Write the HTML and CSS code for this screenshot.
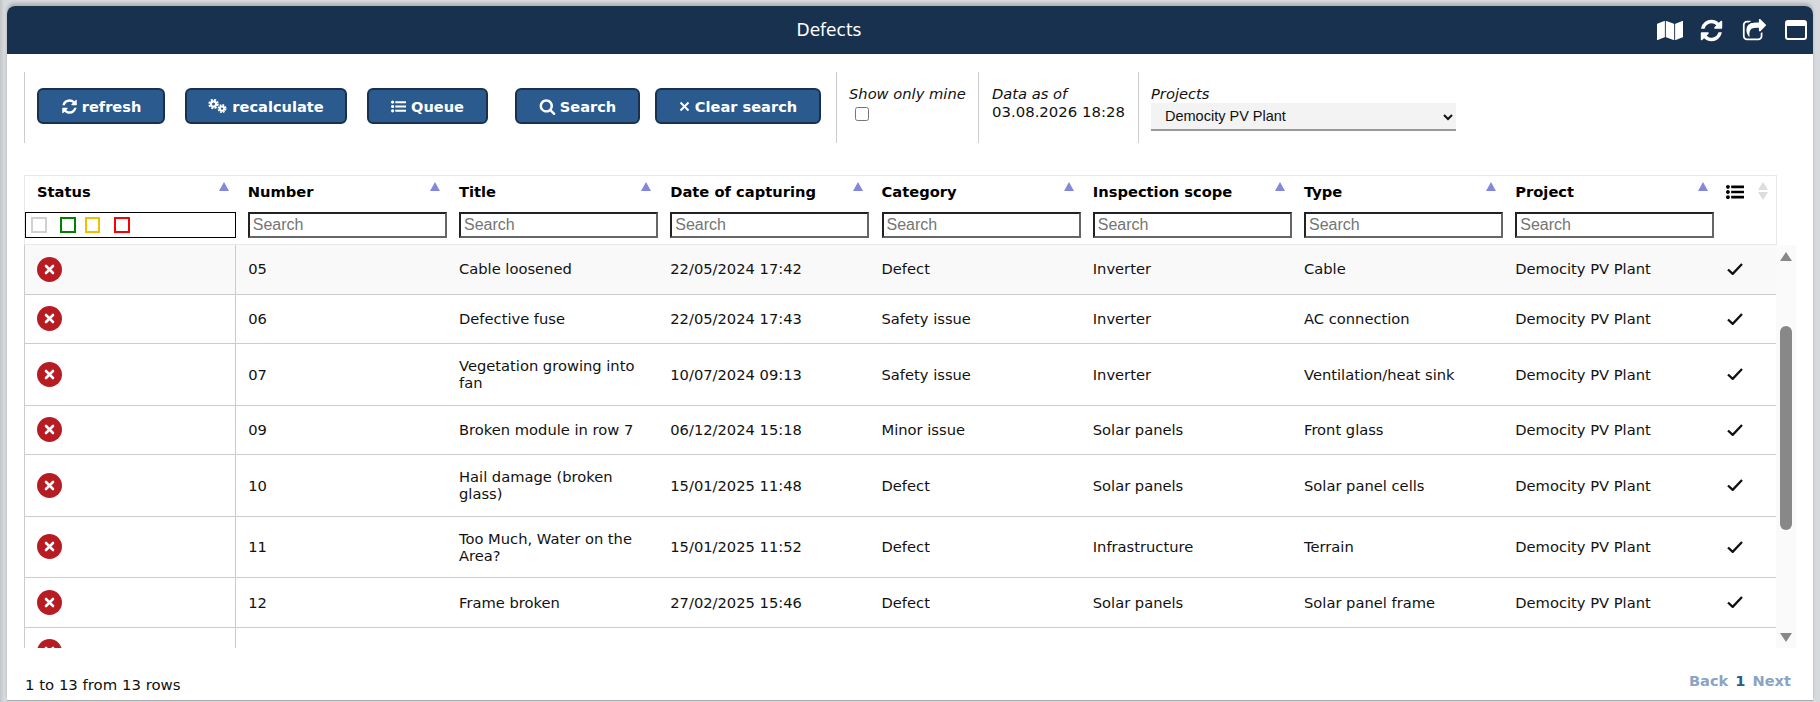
FILE: index.html
```html
<!DOCTYPE html>
<html lang="en">
<head>
<meta charset="utf-8">
<title>Defects</title>
<link rel="stylesheet" href="styles.css">
</head>
<body>
<svg class="defs" width="0" height="0" aria-hidden="true">
  <defs>
    <symbol id="i-refresh" viewBox="0 0 1792 1792"><path d="M1639 1056q0 5-1 7-64 268-268 434.5t-478 166.5q-146 0-282.5-55t-243.5-157l-129 129q-19 19-45 19t-45-19-19-45v-448q0-26 19-45t45-19h448q26 0 45 19t19 45-19 45l-137 137q71 66 161 102t187 36q134 0 250-65t186-179q11-17 53-117 8-23 30-23h192q13 0 22.5 9.5t9.5 22.5zm25-800v448q0 26-19 45t-45 19h-448q-26 0-45-19t-19-45 19-45l138-138q-148-137-349-137-134 0-250 65t-186 179q-11 17-53 117-8 23-30 23h-199q-13 0-22.5-9.5t-9.5-22.5v-7q65-268 270-434.5t480-166.5q146 0 284 55.5t245 156.5l130-129q19-19 45-19t45 19 19 45z"/></symbol>
    <symbol id="i-cogs" viewBox="0 0 19 14">
      <circle cx="5.5" cy="5" r="2.6" fill="none" stroke="#fff" stroke-width="2.2"/>
      <circle cx="5.5" cy="5" r="4.3" fill="none" stroke="#fff" stroke-width="1.8" stroke-dasharray="2 1.4"/>
      <circle cx="14" cy="9.6" r="2.2" fill="none" stroke="#fff" stroke-width="2"/>
      <circle cx="14" cy="9.6" r="3.7" fill="none" stroke="#fff" stroke-width="1.6" stroke-dasharray="1.8 1.1"/>
    </symbol>
    <symbol id="i-list" viewBox="0 0 1792 1792"><path d="M384 1408q0 80-56 136t-136 56-136-56-56-136 56-136 136-56 136 56 56 136zm0-512q0 80-56 136t-136 56-136-56-56-136 56-136 136-56 136 56 56 136zm1408 416v192q0 13-9.5 22.5t-22.5 9.5h-1216q-13 0-22.5-9.5t-9.5-22.5v-192q0-13 9.5-22.5t22.5-9.5h1216q13 0 22.5 9.5t9.5 22.5zm-1408-928q0 80-56 136t-136 56-136-56-56-136 56-136 136-56 136 56 56 136zm1408 416v192q0 13-9.5 22.5t-22.5 9.5h-1216q-13 0-22.5-9.5t-9.5-22.5v-192q0-13 9.5-22.5t22.5-9.5h1216q13 0 22.5 9.5t9.5 22.5zm0-512v192q0 13-9.5 22.5t-22.5 9.5h-1216q-13 0-22.5-9.5t-9.5-22.5v-192q0-13 9.5-22.5t22.5-9.5h1216q13 0 22.5 9.5t9.5 22.5z"/></symbol>
    <symbol id="i-search" viewBox="0 0 1792 1792"><path d="M1216 832q0-185-131.5-316.5t-316.5-131.5-316.5 131.5-131.5 316.5 131.5 316.5 316.5 131.5 316.5-131.5 131.5-316.5zm512 832q0 52-38 90t-90 38q-54 0-90-38l-343-342q-179 124-399 124-143 0-273.5-55.5t-225-150-150-225-55.5-273.5 55.5-273.5 150-225 225-150 273.5-55.5 273.5 55.5 225 150 150 225 55.5 273.5q0 220-124 399l343 343q37 37 37 90z"/></symbol>
    <symbol id="i-times" viewBox="0 0 11 11"><path d="M1.5 1.5l8 8M9.5 1.5l-8 8" stroke="#fff" stroke-width="2" fill="none"/></symbol>
    <symbol id="i-map" viewBox="0 0 1792 1792" preserveAspectRatio="none"><path d="M512 0q13 0 22.5 9.5t9.5 22.5v1472q0 20-17 28l-480 256q-7 4-15 4-13 0-22.5-9.5t-9.5-22.5v-1472q0-20 17-28l480-256q7-4 15-4zm1248 0q13 0 22.5 9.5t9.5 22.5v1472q0 20-17 28l-480 256q-7 4-15 4-13 0-22.5-9.5t-9.5-22.5v-1472q0-20 17-28l480-256q7-4 15-4zm-1120 0q8 0 14 3l512 256q18 10 18 29v1472q0 13-9.5 22.5t-22.5 9.5q-8 0-14-3l-512-256q-18-10-18-29v-1472q0-13 9.5-22.5t22.5-9.5z"/></symbol>
    <symbol id="i-share" viewBox="0 128 1728 1408"><path d="M1472 989v259q0 119-84.5 203.5t-203.5 84.5h-832q-119 0-203.5-84.5t-84.5-203.5v-832q0-119 84.5-203.5t203.5-84.5h255q13 0 22.5 9.5t9.5 22.5q0 27-26 32-77 26-133 60-10 4-16 4h-112q-66 0-113 47t-47 113v832q0 66 47 113t113 47h832q66 0 113-47t47-113v-214q0-19 18-29 28-13 54-37 16-16 35-8 21 9 21 29zm237-496l-384 384q-18 19-45 19-12 0-25-5-39-17-39-59v-192h-160q-323 0-438 131-119 137-74 473 3 23-20 34-8 2-12 2-16 0-26-13-10-14-21-31t-39.5-68.5-49.5-99.5-38.5-114-17.5-122q0-49 3.5-91t14-90 28-88 47-81.5 68.5-74 94.5-61.5 124.5-48.5 159.5-30.5 196.5-11h160v-192q0-42 39-59 13-5 25-5 26 0 45 19l384 384q19 19 19 45t-19 45z"/></symbol>
    <symbol id="i-window" viewBox="0 0 22 20"><path fill-rule="evenodd" d="M3 0h16a3 3 0 0 1 3 3v14a3 3 0 0 1-3 3H3a3 3 0 0 1-3-3V3a3 3 0 0 1 3-3zM2 6v11a1 1 0 0 0 1 1h16a1 1 0 0 0 1-1V6z"/></symbol>
    <symbol id="i-error" viewBox="0 0 25 25"><circle cx="12.5" cy="12.5" r="12.5" fill="#b71c22"/><path d="M9 9l7 7M16 9l-7 7" stroke="#fff" stroke-width="2.6" stroke-linecap="round" fill="none"/></symbol>
    <symbol id="i-check" viewBox="0 0 16 12"><path d="M1 6.5l4.7 4.4L15 1" stroke="#111" stroke-width="2.3" fill="none"/></symbol>
  </defs>
</svg>

<div class="window">
  <header class="titlebar">
    <h1 class="title">Defects</h1>
    <div class="window-tools">
      <svg class="tool tool-map"><use href="#i-map"/></svg>
      <svg class="tool tool-refresh"><use href="#i-refresh"/></svg>
      <svg class="tool tool-share"><use href="#i-share"/></svg>
      <svg class="tool tool-window"><use href="#i-window"/></svg>
    </div>
  </header>

  <section class="toolbar">
    <div class="tb-section tb-buttons">
      <button class="btn btn-refresh" type="button"><svg class="btn-icon"><use href="#i-refresh"/></svg>refresh</button>
      <button class="btn btn-recalc" type="button"><svg class="btn-icon btn-icon-wide"><use href="#i-cogs"/></svg>recalculate</button>
      <button class="btn btn-queue" type="button"><svg class="btn-icon btn-icon-list"><use href="#i-list"/></svg>Queue</button>
      <button class="btn btn-search" type="button"><svg class="btn-icon"><use href="#i-search"/></svg>Search</button>
      <button class="btn btn-clear" type="button"><svg class="btn-icon btn-icon-small"><use href="#i-times"/></svg>Clear search</button>
    </div>
    <div class="tb-section tb-mine">
      <label class="tb-label" for="mine">Show only mine</label>
      <input class="mine-check" id="mine" type="checkbox">
    </div>
    <div class="tb-section tb-data">
      <span class="tb-label">Data as of</span>
      <span class="tb-value">03.08.2026 18:28</span>
    </div>
    <div class="tb-section tb-projects">
      <label class="tb-label" for="project">Projects</label>
      <select class="project-select" id="project"><option>Democity PV Plant</option></select>
    </div>
  </section>

  <section class="grid">
    <table class="grid-head">
      <colgroup><col class="col-data"><col class="col-data"><col class="col-data"><col class="col-data"><col class="col-data"><col class="col-data"><col class="col-data"><col class="col-data"><col class="col-last"></colgroup>
      <thead>
        <tr class="head-row">
          <th>Status<span class="sort-up"></span></th>
          <th>Number<span class="sort-up"></span></th>
          <th>Title<span class="sort-up"></span></th>
          <th>Date of capturing<span class="sort-up"></span></th>
          <th>Category<span class="sort-up"></span></th>
          <th>Inspection scope<span class="sort-up"></span></th>
          <th>Type<span class="sort-up"></span></th>
          <th>Project<span class="sort-up"></span></th>
          <th class="th-tools"><svg class="list-icon"><use href="#i-list"/></svg><span class="sort-both"><span class="sort-pale-up"></span><span class="sort-pale-down"></span></span></th>
        </tr>
        <tr class="filter-row">
          <td class="status-filter-cell">
            <div class="status-filter">
              <span class="st st-grey"></span><span class="st st-green"></span><span class="st st-yellow"></span><span class="st st-red"></span>
            </div>
          </td>
          <td><input class="search" type="text" placeholder="Search"></td>
          <td><input class="search" type="text" placeholder="Search"></td>
          <td><input class="search" type="text" placeholder="Search"></td>
          <td><input class="search" type="text" placeholder="Search"></td>
          <td><input class="search" type="text" placeholder="Search"></td>
          <td><input class="search" type="text" placeholder="Search"></td>
          <td><input class="search" type="text" placeholder="Search"></td>
          <td></td>
        </tr>
      </thead>
    </table>

    <div class="grid-scroll">
      <div class="grid-body">
        <table class="rows">
          <colgroup><col class="col-data"><col class="col-data"><col class="col-data"><col class="col-data"><col class="col-data"><col class="col-data"><col class="col-data"><col class="col-data"><col class="col-last"></colgroup>
          <tbody>
            <tr class="row-active"><td><svg class="status-icon"><use href="#i-error"/></svg></td><td>05</td><td>Cable loosened</td><td>22/05/2024 17:42</td><td>Defect</td><td>Inverter</td><td>Cable</td><td>Democity PV Plant</td><td><svg class="check-icon"><use href="#i-check"/></svg></td></tr>
            <tr><td><svg class="status-icon"><use href="#i-error"/></svg></td><td>06</td><td>Defective fuse</td><td>22/05/2024 17:43</td><td>Safety issue</td><td>Inverter</td><td>AC connection</td><td>Democity PV Plant</td><td><svg class="check-icon"><use href="#i-check"/></svg></td></tr>
            <tr><td><svg class="status-icon"><use href="#i-error"/></svg></td><td>07</td><td>Vegetation growing into fan</td><td>10/07/2024 09:13</td><td>Safety issue</td><td>Inverter</td><td>Ventilation/heat sink</td><td>Democity PV Plant</td><td><svg class="check-icon"><use href="#i-check"/></svg></td></tr>
            <tr><td><svg class="status-icon"><use href="#i-error"/></svg></td><td>09</td><td>Broken module in row 7</td><td>06/12/2024 15:18</td><td>Minor issue</td><td>Solar panels</td><td>Front glass</td><td>Democity PV Plant</td><td><svg class="check-icon"><use href="#i-check"/></svg></td></tr>
            <tr><td><svg class="status-icon"><use href="#i-error"/></svg></td><td>10</td><td>Hail damage (broken glass)</td><td>15/01/2025 11:48</td><td>Defect</td><td>Solar panels</td><td>Solar panel cells</td><td>Democity PV Plant</td><td><svg class="check-icon"><use href="#i-check"/></svg></td></tr>
            <tr><td><svg class="status-icon"><use href="#i-error"/></svg></td><td>11</td><td>Too Much, Water on the Area?</td><td>15/01/2025 11:52</td><td>Defect</td><td>Infrastructure</td><td>Terrain</td><td>Democity PV Plant</td><td><svg class="check-icon"><use href="#i-check"/></svg></td></tr>
            <tr><td><svg class="status-icon"><use href="#i-error"/></svg></td><td>12</td><td>Frame broken</td><td>27/02/2025 15:46</td><td>Defect</td><td>Solar panels</td><td>Solar panel frame</td><td>Democity PV Plant</td><td><svg class="check-icon"><use href="#i-check"/></svg></td></tr>
            <tr class="row-partial"><td><svg class="status-icon"><use href="#i-error"/></svg></td><td>13</td><td>Bolts loose</td><td>27/02/2025 15:50</td><td>Minor issue</td><td>Inverter</td><td>Connector</td><td>Democity PV Plant</td><td><svg class="check-icon"><use href="#i-check"/></svg></td></tr>
          </tbody>
        </table>
      </div>
      <div class="scrollbar">
        <span class="sb-up"></span>
        <span class="sb-thumb"></span>
        <span class="sb-down"></span>
      </div>
    </div>
  </section>

  <footer class="footer">
    <span class="row-count">1 to 13 from 13 rows</span>
    <nav class="pager"><span class="pg-off">Back</span><span class="pg-on">1</span><span class="pg-off">Next</span></nav>
  </footer>
</div>
</body>
</html>
```
FILE: styles.css
```css
* { box-sizing: border-box; }
html, body { height: 100%; }
body {
  margin: 0;
  overflow: hidden;
  background: linear-gradient(90deg, #c2c4c7 0, #d6d9dd 4px, #d6d9dd 100%);
  font-family: "DejaVu Sans", Verdana, sans-serif;
  font-size: 14.7px;
  color: #111;
}
.defs { position: absolute; }
.window {
  margin: 6px 7px 0;
  height: 695px;
  background: #fff;
  border-radius: 8px 8px 0 0;
  border-bottom: 1px solid #aaa;
  box-shadow: 0 -3px 3px #b4b4b4;
  display: flex;
  flex-direction: column;
}
.titlebar {
  flex: none;
  height: 48px;
  background: #17314f;
  border-radius: 8px 8px 0 0;
  display: flex;
  align-items: center;
}
.title {
  flex: 1;
  margin: 0;
  text-align: center;
  color: #fff;
  font-size: 17px;
  font-weight: 400;
}
.window-tools {
  flex: none;
  width: 162px;
  padding-left: 6px;
  display: flex;
  align-items: center;
  fill: #fff;
}
.tool { display: block; }
.tool-map { width: 26px; height: 19px; margin-right: 16px; }
.tool-refresh { width: 25px; height: 25px; margin-right: 18px; }
.tool-share { width: 24px; height: 23px; margin-right: 19px; }
.tool-window { width: 22px; height: 20px; }

.toolbar {
  flex: none;
  margin: 18px 0 0 17px;
  height: 71px;
  display: flex;
}
.tb-section {
  border-left: 1px solid #ccc;
  display: flex;
  flex-direction: column;
}
.tb-buttons {
  width: 812px;
  padding: 16px 0 0 12px;
  flex-direction: row;
  align-items: flex-start;
}
.btn {
  height: 36px;
  padding: 0;
  border: 2px solid #17314f;
  border-radius: 6px;
  background: #2a5a8e;
  color: #fff;
  font: 700 14.6px "DejaVu Sans", Verdana, sans-serif;
  display: flex;
  align-items: center;
  justify-content: center;
  fill: #fff;
}
.btn-icon { width: 17px; height: 17px; margin-right: 4px; flex: none; }
.btn-icon-wide { width: 19px; height: 14px; margin-right: 5px; }
.btn-icon-list { width: 15px; height: 15px; margin-right: 5px; }
.btn-icon-small { width: 11px; height: 11px; margin-right: 5px; }
.btn-refresh { width: 128px; margin-right: 20px; }
.btn-recalc { width: 162px; margin-right: 20px; }
.btn-queue { width: 121px; margin-right: 27px; }
.btn-search { width: 125px; margin-right: 15px; }
.btn-clear { width: 166px; }

.tb-label { font-style: italic; line-height: 18px; }
.tb-mine { width: 142px; padding: 13px 0 0 12px; }
.mine-check { width: 14px; height: 14px; margin: 4px 0 0 6px; }
.tb-data { width: 160px; padding: 13px 0 0 13px; }
.tb-value { line-height: 18px; font-size: 14.9px; }
.tb-projects { padding: 13px 0 0 12px; }
.project-select {
  width: 305px;
  height: 28px;
  margin-top: 0;
  padding-left: 10px;
  border: 0;
  border-bottom: 2px solid #999;
  border-radius: 0;
  background-color: #f3f3f3;
  color: #111;
  font: 14.5px "Liberation Sans", Arial, sans-serif;
}

.grid { flex: none; margin: 32px 0 0 17px; }
table { border-collapse: collapse; table-layout: fixed; width: 1752px; }
.col-data { width: 211.25px; }
.col-last { width: 62px; }
.grid-head { border: 1px solid #e8e8e8; border-bottom: 1px solid #e8e8e8; }
.head-row th {
  position: relative;
  height: 36px;
  padding: 0 12px 4px;
  font-size: 14.7px;
  font-weight: 700;
  text-align: left;
  color: #000;
}
.sort-up {
  position: absolute;
  top: 6px;
  right: 7px;
  border-left: 5.5px solid transparent;
  border-right: 5.5px solid transparent;
  border-bottom: 9px solid #8289dc;
}
.th-tools { white-space: nowrap; }
.list-icon { width: 18px; height: 18px; fill: #000; vertical-align: middle; display: block; margin-left: -1px; }
.sort-both { position: absolute; right: 7px; top: 6px; width: 11px; height: 18px; }
.sort-pale-up, .sort-pale-down {
  position: absolute;
  left: 0;
  border-left: 5.5px solid transparent;
  border-right: 5.5px solid transparent;
}
.sort-pale-up { top: 0; border-bottom: 8px solid #ddd; }
.sort-pale-down { top: 10px; border-top: 8px solid #ddd; }
.filter-row td { height: 32px; padding: 0 12px 6px; }
.filter-row .status-filter-cell { padding: 0 0 6px 0; }
.status-filter {
  height: 26px;
  width: 211px;
  border: 1px solid #000;
  display: flex;
  align-items: center;
  padding-left: 5px;
}
.st { display: block; width: 16px; height: 16px; border: 2px solid; }
.st-grey { border-color: #d0d0d0; margin-right: 13px; }
.st-green { border-color: #008000; margin-right: 9px; }
.st-yellow { border-color: #f0c000; width: 15px; margin-right: 14px; }
.st-red { border-color: #f00; }
.search {
  display: block;
  width: 199px;
  height: 26px;
  padding: 0 3px;
  border: 2px solid;
  border-color: #222 #666 #666 #222;
  font: 16px "Liberation Sans", Arial, sans-serif;
  color: #111;
}
.search::placeholder { color: #757575; }

.grid-scroll { display: flex; height: 403px; }
.grid-body { width: 1752px; height: 403px; overflow: hidden; border-left: 1px solid #ccc; flex: none; }
.rows { margin-left: -1px; }
.rows td {
  height: 49.5px;
  padding: 13px 11px 13px 12.5px;
  line-height: 17.25px;
  border-bottom: 1px solid #ccc;
  vertical-align: middle;
}
.rows td:first-child { border-right: 1px solid #ccc; padding-left: 12.5px; }
.row-active td { background: #f9f9f9; }
.rows .row-partial td:not(:first-child) { padding-top: 17px; }
.status-icon { width: 25px; height: 25px; display: block; margin: -2px 0; }
.check-icon { width: 16px; height: 12px; display: block; }

.scrollbar {
  flex: none;
  width: 20px;
  height: 403px;
  background: #fafafa;
  padding: 7px 4px 6px;
  display: flex;
  flex-direction: column;
  align-items: center;
}
.sb-up { border-left: 6px solid transparent; border-right: 6px solid transparent; border-bottom: 9px solid #888; }
.sb-thumb { width: 12px; height: 204px; margin-top: 65px; background: #888; border-radius: 6px; }
.sb-down { margin-top: auto; border-left: 6px solid transparent; border-right: 6px solid transparent; border-top: 9px solid #888; }

.footer {
  flex: none;
  margin: 27px 22px 0 18px;
  display: flex;
  justify-content: space-between;
  align-items: flex-start;
}
.row-count { line-height: 20px; font-size: 14.9px; }
.pager { display: flex; gap: 7px; font-size: 14.6px; font-weight: 700; line-height: 18px; margin-top: -3px; }
.pg-off { color: #8aa4c4; }
.pg-on { color: #2a5a8e; }
```
